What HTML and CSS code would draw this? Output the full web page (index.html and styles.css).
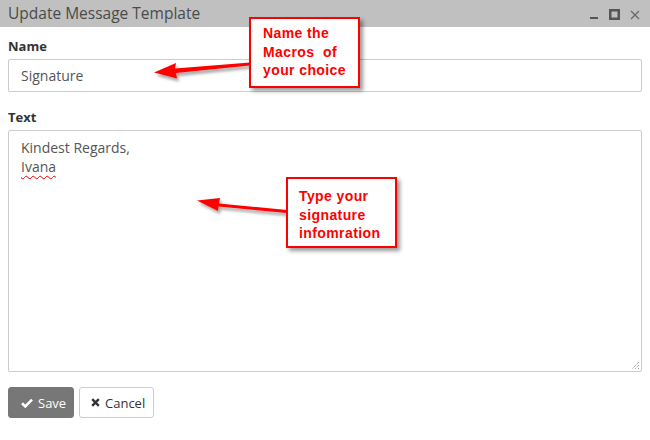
FILE: index.html
```html
<!DOCTYPE html>
<html>
<head>
<meta charset="utf-8">
<link rel="stylesheet" href="styles.css">
</head>
<body>
<div class="window">
  <div class="titlebar">
    <span class="title">Update Message Template</span>
    <div class="controls">
      <svg width="10" height="10" viewBox="0 0 10 10"><rect x="1" y="7" width="8" height="2" fill="#555"/></svg>
      <svg width="11" height="11" viewBox="0 0 11 11"><rect x="1.25" y="1.25" width="8.5" height="8.5" fill="none" stroke="#555" stroke-width="2.5"/></svg>
      <svg width="10" height="10" viewBox="0 0 10 10"><path d="M1 1L9 9M9 1L1 9" stroke="#666" stroke-width="1.2"/></svg>
    </div>
  </div>
  <div class="content">
    <label class="label">Name</label>
    <div class="input">Signature</div>
    <label class="label label-text">Text</label>
    <div class="textarea">
      <div>Kindest Regards,</div>
      <div><span class="spell">Ivana</span></div>
      <svg class="grip" width="10" height="10" viewBox="0 0 10 10"><path d="M9 2L2 9M9 5L5 9M9 8L8 9" stroke="#777" stroke-width="1" stroke-dasharray="1 1"/></svg>
    </div>
    <div class="buttons">
      <button class="btn btn-save"><svg class="ico" width="12" height="10" viewBox="0 0 12 10"><path d="M1 5.2L4.3 8.4L11 1.6" fill="none" stroke="#fff" stroke-width="2.6"/></svg>Save</button>
      <button class="btn btn-cancel"><svg class="ico" width="9" height="9" viewBox="0 0 9 9"><path d="M1.2 1.2L7.8 7.8M7.8 1.2L1.2 7.8" stroke="#333" stroke-width="2.4"/></svg>Cancel</button>
    </div>
  </div>
</div>
<svg class="arrows" width="650" height="440" viewBox="0 0 650 440">
  <defs>
    <filter id="sh" x="-20%" y="-50%" width="140%" height="200%">
      <feDropShadow dx="2" dy="3" stdDeviation="1.5" flood-color="#000" flood-opacity="0.35"/>
    </filter>
  </defs>
  <g filter="url(#sh)" fill="#f00">
    <path d="M250 62.5 L175 68.6 L176 63 L154 72.5 L177 78.5 L176 73 L250 65.5 Z"/>
    <path d="M287 210 L219 203.5 L220 198 L197 200.5 L218 211 L218.5 206.5 L286.5 213 Z"/>
  </g>
</svg>
<div class="callout callout-1">Name the<br>Macros&nbsp; of<br>your choice</div>
<div class="callout callout-2">Type your<br>signature<br>infomration</div>
</body>
</html>
```
FILE: styles.css
```css
* { box-sizing: border-box; }
html, body { margin: 0; padding: 0; background: #fff; }
body { width: 650px; height: 440px; overflow: hidden; position: relative; font-family: "Open Sans", "DejaVu Sans", sans-serif; }
.window { display: flex; flex-direction: column; }
.titlebar {
  height: 27px; background: #c0c0c0; display: flex; align-items: center;
  justify-content: space-between; padding: 0 10px 0 8px;
}
.title { font-size: 15.5px; color: #4a4a4a; font-weight: 400; margin-top: -1px; }
.controls { display: flex; align-items: center; gap: 10px; margin-top: 2px; }
.content { display: flex; flex-direction: column; padding: 0 8px; }
.label { font-size: 13px; font-weight: 700; color: #333; line-height: 18px; }
.content > .label:first-child { margin-top: 10px; margin-bottom: 4px; }
.input {
  width: 634px; height: 33px; border: 1px solid #ccc; border-radius: 2px;
  padding: 0 12px; font-size: 14px; color: #555; line-height: 31px;
}
.label-text { margin-top: 16px; margin-bottom: 4px; }
.textarea {
  position: relative; width: 634px; height: 242px; border: 1px solid #ccc; border-radius: 2px;
  padding: 7px 12px; font-size: 14px; color: #555; line-height: 19px;
}
.spell { text-decoration: underline wavy #e00; text-decoration-thickness: 1px; text-underline-offset: 3px; }
.grip { position: absolute; right: 1px; bottom: 1px; }
.buttons { display: flex; gap: 5px; margin-top: 15px; }
.btn {
  height: 31px; border-radius: 3px; font-family: "Open Sans", sans-serif; font-size: 13px;
  display: flex; align-items: center; gap: 5px; padding: 0; cursor: pointer;
}
.ico { flex-shrink: 0; }
.btn-save { width: 66px; background: #777; border: 1px solid #777; color: #fff; padding-left: 12px; }
.btn-cancel { width: 75px; background: #fff; border: 1px solid #ccc; color: #333; padding-left: 11px; }
.arrows { position: absolute; left: 0; top: 0; pointer-events: none; }
.callout {
  position: absolute; border: 2px solid #f00; background: #fff; color: #f00;
  font-family: "Liberation Sans", Arial, sans-serif; font-weight: 700; font-size: 14px;
  line-height: 18.5px; letter-spacing: 0.4px; box-shadow: 3px 3px 4px rgba(0,0,0,0.4);
}
.callout-1 { left: 249px; top: 17px; width: 111px; height: 71px; padding: 5px 0 0 12px; }
.callout-2 { left: 286px; top: 177px; width: 111px; height: 71px; padding: 8px 0 0 11px; }
```
